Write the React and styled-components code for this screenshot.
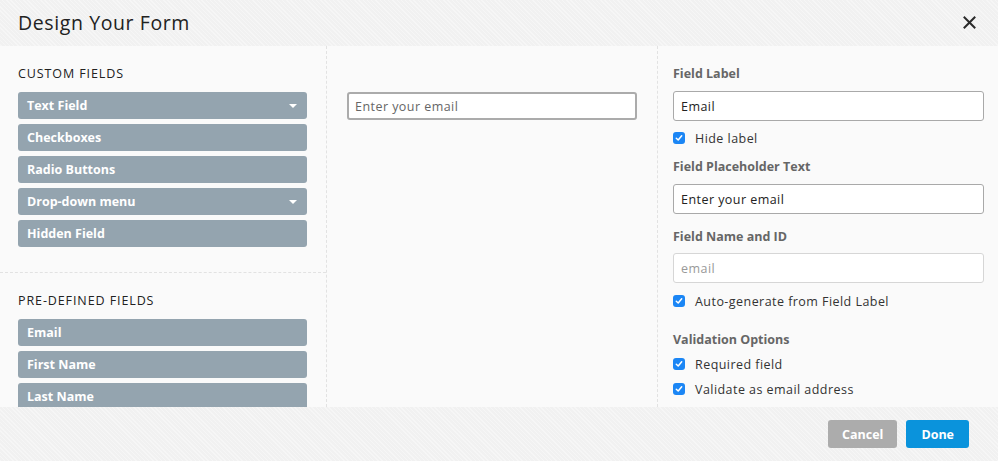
import React from "react";
import styled, { createGlobalStyle } from "styled-components";

const Global = createGlobalStyle`
  html, body { margin: 0; padding: 0; }
  body { font-family: "Open Sans", "Liberation Sans", sans-serif; background: #f1f1f1; }
  * { box-sizing: border-box; }
`;

const Modal = styled.div`
  width: 998px;
  height: 461px;
  display: flex;
  flex-direction: column;
  background: #f1f1f1;
  background-image: repeating-linear-gradient(45deg, rgba(255,255,255,0.35) 0 1px, transparent 1px 3px);
`;

const Header = styled.div`
  height: 46px;
  display: flex;
  align-items: center;
  justify-content: space-between;
  padding: 0 21px 2px 18px;
`;

const Title = styled.h1`
  margin: 0;
  font-size: 19.5px;
  font-weight: 500;
  color: #222;
  letter-spacing: 0.6px;
`;

const Close = styled.button`
  border: 0;
  background: none;
  padding: 0;
  width: 16px;
  height: 16px;
  display: flex;
  align-items: center;
  justify-content: center;
  cursor: pointer;
`;

const Body = styled.div`
  height: 361px;
  display: grid;
  grid-template-columns: 327px 331px 1fr;
  background: #fafafa;
  overflow: hidden;
`;

const Column = styled.div`
  border-right: ${(p) => (p.$last ? "none" : "1px dashed #e2e2e2")};
  display: flex;
  flex-direction: column;
  overflow: hidden;
`;

const Section = styled.div`
  padding: ${(p) => p.$pad};
  border-bottom: ${(p) => (p.$divider ? "1px dashed #e2e2e2" : "none")};
  display: flex;
  flex-direction: column;
`;

const SectionTitle = styled.div`
  font-size: 12.5px;
  line-height: 16px;
  color: #222;
  text-transform: uppercase;
  letter-spacing: 0.9px;
  margin-bottom: 10px;
`;

const FieldButton = styled.div`
  height: 27px;
  border-radius: 3px;
  background: #94a4af;
  color: #fff;
  font-weight: 700;
  font-size: 12.5px;
  display: flex;
  align-items: center;
  justify-content: space-between;
  padding: 0 10px 0 9px;
  margin-bottom: 5px;
  flex-shrink: 0;
`;

const Caret = styled.span`
  width: 0;
  height: 0;
  border-left: 4.5px solid transparent;
  border-right: 4.5px solid transparent;
  border-top: 4.5px solid #fff;
`;

const PreviewPane = styled.div`
  padding: 46px 20px 0 20px;
`;

const PreviewInput = styled.div`
  height: 28px;
  border: 2px solid #ababab;
  border-radius: 3px;
  background: #fff;
  color: #666;
  font-size: 12.5px;
  letter-spacing: 0.45px;
  display: flex;
  align-items: center;
  padding: 0 6px;
`;

const Settings = styled.div`
  padding: 20px 14px 0 15px;
  display: flex;
  flex-direction: column;
`;

const Label = styled.div`
  font-size: 12.5px;
  font-weight: 700;
  color: #666;
  line-height: 16px;
  margin-top: ${(p) => p.$mt || 0}px;
`;

const TextInput = styled.div`
  height: 30px;
  border: 1px solid ${(p) => (p.$muted ? "#d6d6d6" : "#a9a9a9")};
  border-radius: 3px;
  background: #fff;
  color: ${(p) => (p.$muted ? "#999" : "#222")};
  font-size: 12.5px;
  letter-spacing: 0.45px;
  display: flex;
  align-items: center;
  padding: 0 7px;
  margin-top: ${(p) => p.$mt || 0}px;
`;

const CheckRow = styled.div`
  display: flex;
  align-items: center;
  gap: 10px;
  height: 16px;
  font-size: 12.5px;
  letter-spacing: 0.45px;
  color: #333;
  margin-top: ${(p) => p.$mt || 0}px;
`;

const Box = styled.span`
  width: 12px;
  height: 12px;
  border-radius: 3px;
  background: #1b86f5;
  display: flex;
  align-items: center;
  justify-content: center;
  flex-shrink: 0;
`;

const Footer = styled.div`
  flex: 1;
  display: flex;
  justify-content: flex-end;
  align-items: flex-start;
  gap: 9px;
  padding: 13px 29px 0 0;
`;

const Button = styled.button`
  height: 28px;
  border: 0;
  border-radius: 3px;
  padding: 0 ${(p) => (p.$primary ? 15 : 14)}px;
  background: ${(p) => (p.$primary ? "#0a93dc" : "#acacac")};
  color: #fff;
  font-family: inherit;
  font-weight: 700;
  font-size: 12.5px;
  cursor: pointer;
`;

const Check = () => (
  <Box>
    <svg width="8" height="8" viewBox="0 0 8 8">
      <path d="M1.3 4.2 L3.2 6 L6.7 1.8" fill="none" stroke="#fff" strokeWidth="1.5" strokeLinecap="round" strokeLinejoin="round" />
    </svg>
  </Box>
);

const customFields = [
  { name: "Text Field", caret: true },
  { name: "Checkboxes" },
  { name: "Radio Buttons" },
  { name: "Drop-down menu", caret: true },
  { name: "Hidden Field" },
];
const predefined = ["Email", "First Name", "Last Name"];

export default function App() {
  return (
    <>
      <Global />
      <Modal>
        <Header>
          <Title>Design Your Form</Title>
          <Close aria-label="Close">
            <svg width="13" height="13" viewBox="0 0 13 13">
              <path d="M1.5 1.5 L11.5 11.5 M11.5 1.5 L1.5 11.5" stroke="#2a2a2a" strokeWidth="2" strokeLinecap="square" />
            </svg>
          </Close>
        </Header>
        <Body>
          <Column>
            <Section $pad="20px 19px 20px 18px" $divider>
              <SectionTitle>Custom Fields</SectionTitle>
              {customFields.map((f) => (
                <FieldButton key={f.name}>
                  {f.name}
                  {f.caret && <Caret />}
                </FieldButton>
              ))}
            </Section>
            <Section $pad="20px 19px 0 18px">
              <SectionTitle>Pre-defined Fields</SectionTitle>
              {predefined.map((f) => (
                <FieldButton key={f}>{f}</FieldButton>
              ))}
            </Section>
          </Column>
          <Column>
            <PreviewPane>
              <PreviewInput>Enter your email</PreviewInput>
            </PreviewPane>
          </Column>
          <Column $last>
            <Settings>
              <Label>Field Label</Label>
              <TextInput $mt={9}>Email</TextInput>
              <CheckRow $mt={9}><Check />Hide label</CheckRow>
              <Label $mt={13}>Field Placeholder Text</Label>
              <TextInput $mt={9}>Enter your email</TextInput>
              <Label $mt={15}>Field Name and ID</Label>
              <TextInput $mt={8} $muted>email</TextInput>
              <CheckRow $mt={10}><Check />Auto-generate from Field Label</CheckRow>
              <Label $mt={23}>Validation Options</Label>
              <CheckRow $mt={8}><Check />Required field</CheckRow>
              <CheckRow $mt={9}><Check />Validate as email address</CheckRow>
            </Settings>
          </Column>
        </Body>
        <Footer>
          <Button>Cancel</Button>
          <Button $primary>Done</Button>
        </Footer>
      </Modal>
    </>
  );
}
